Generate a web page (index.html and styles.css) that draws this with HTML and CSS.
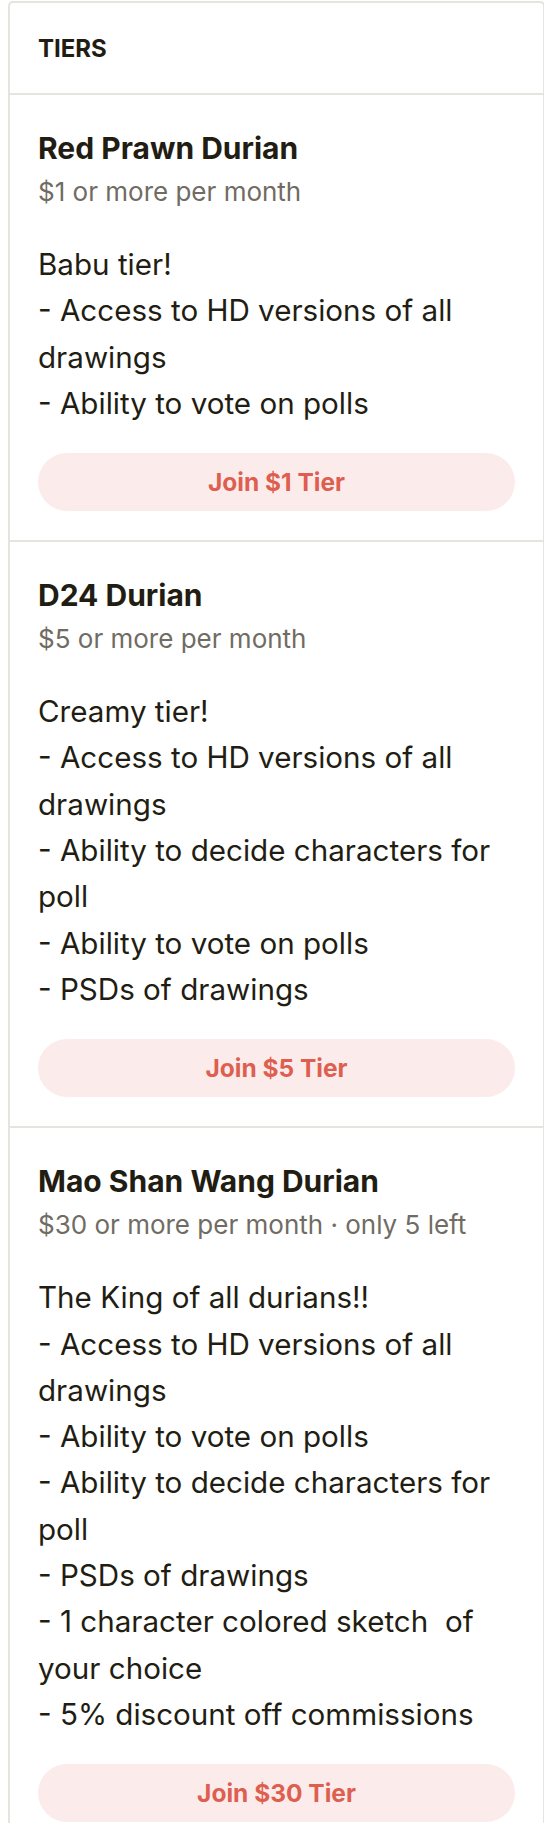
FILE: index.html
```html
<!DOCTYPE html>
<html lang="en">
<head>
<meta charset="utf-8">
<title>Tiers</title>
<link rel="stylesheet" href="styles.css">
</head>
<body>
<div class="card">
  <div class="card-header">TIERS</div>
  <div class="tier">
    <div class="tier-title">Red Prawn Durian</div>
    <div class="tier-price">$1 or more per month</div>
    <div class="tier-desc">Babu tier!
- Access to HD versions of all drawings
- Ability to vote on polls</div>
    <button class="join-btn">Join $1 Tier</button>
  </div>
  <div class="tier">
    <div class="tier-title">D24 Durian</div>
    <div class="tier-price">$5 or more per month</div>
    <div class="tier-desc">Creamy tier!
- Access to HD versions of all drawings
- Ability to decide characters for poll
- Ability to vote on polls
- PSDs of drawings</div>
    <button class="join-btn">Join $5 Tier</button>
  </div>
  <div class="tier">
    <div class="tier-title">Mao Shan Wang Durian</div>
    <div class="tier-price">$30 or more per month · only 5 left</div>
    <div class="tier-desc">The King of all durians!!
- Access to HD versions of all drawings
- Ability to vote on polls
- Ability to decide characters for poll
- PSDs of drawings
- 1 character colored sketch  of your choice
- 5% discount off commissions</div>
    <button class="join-btn">Join $30 Tier</button>
  </div>
</div>
</body>
</html>
```
FILE: styles.css
```css
html, body {
  margin: 0;
  padding: 0;
  background: #ffffff;
  overflow: hidden;
}
body {
  padding-top: 1px;
  font-family: Inter, "Liberation Sans", sans-serif;
  color: #221d13;
}
.card {
  margin-left: 8px;
  width: 537px;
  box-sizing: border-box;
  border: 2px solid #e6e4df;
  border-bottom: none;
  border-radius: 5px 5px 0 0;
  background: #ffffff;
}
.card-header {
  height: 92px;
  box-sizing: border-box;
  padding: 0 28px;
  display: flex;
  align-items: center;
  font-size: 24px;
  font-weight: 700;
  border-bottom: 2px solid #e6e4df;
}
.tier {
  padding: 32px 28px 29px 28px;
  border-bottom: 2px solid #e6e4df;
  display: flex;
  flex-direction: column;
}
.tier-title {
  font-size: 30px;
  font-weight: 700;
  line-height: 43px;
}
.tier-price {
  font-size: 26px;
  line-height: 43px;
  color: #706c64;
}
.tier-desc {
  margin-top: 28px;
  font-size: 29.6px;
  line-height: 46.3px;
  white-space: pre-wrap;
}
.join-btn {
  margin-top: 27px;
  height: 58px;
  border: none;
  border-radius: 29px;
  background: #fbeceb;
  color: #de5f50;
  font-family: Inter, "Liberation Sans", sans-serif;
  font-size: 24.5px;
  font-weight: 700;
  cursor: pointer;
}
```
